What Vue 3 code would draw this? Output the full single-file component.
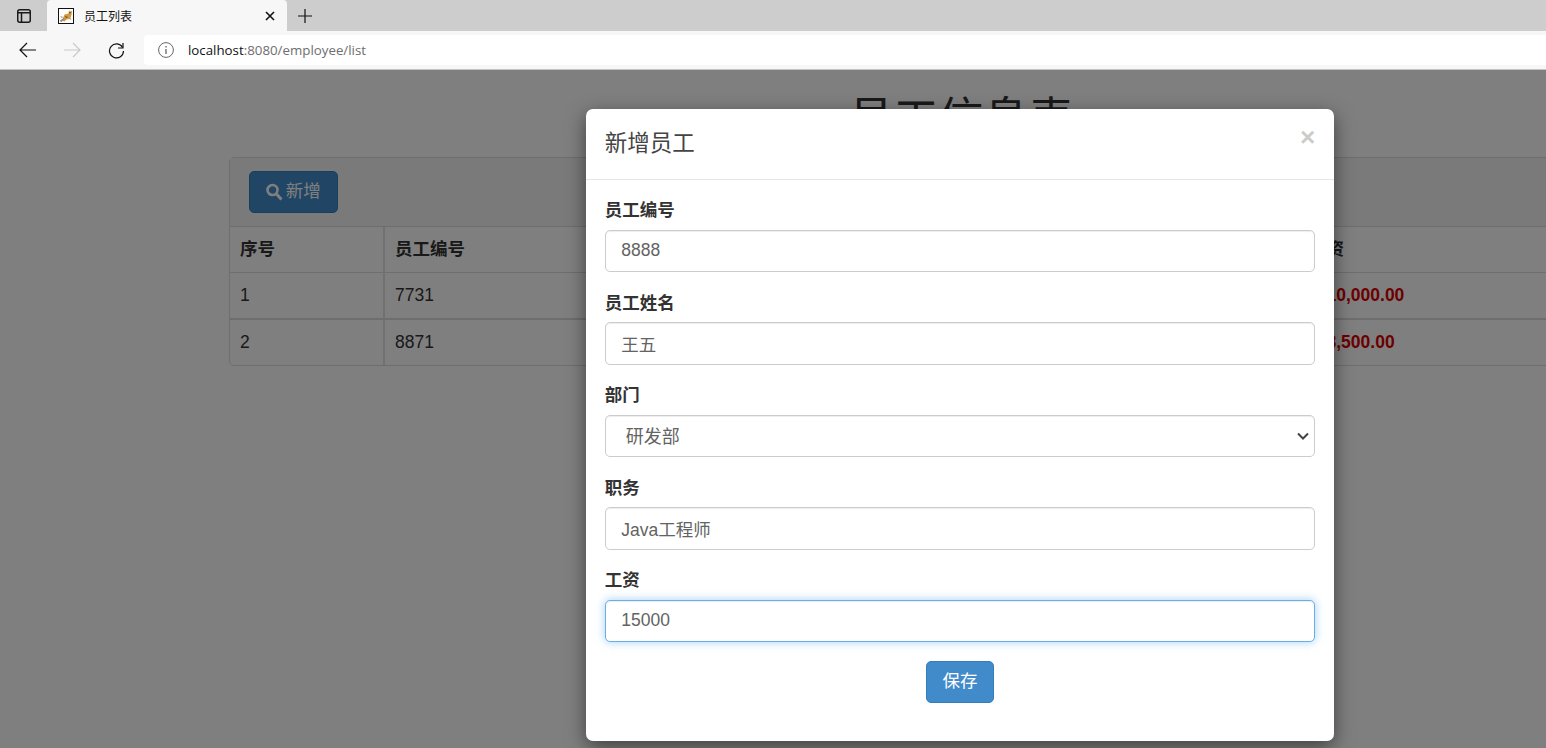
<script setup>
const fields = [
  { label: '员工编号', value: '8888' },
  { label: '员工姓名', value: '王五' },
  { label: '部门', options: ['研发部'] },
  { label: '职务', value: 'Java工程师' },
  { label: '工资', value: '15000', focus: true }
]
const heads = ['序号', '员工编号', '员工姓名', '部门', '职务', '工资']
const rows = [
  ['1', '7731', '￥10,000.00'],
  ['2', '8871', '￥8,500.00']
]
</script>

<template>
  <div class="root">
    <header class="chrome">
      <div class="strip">
        <div class="strip-btn">
          <svg width="16" height="16" viewBox="0 0 16 16" fill="none" stroke="#1a1a1a" stroke-width="1.5">
            <rect x="1.75" y="1.75" width="12.5" height="12.5" rx="2" />
            <path d="M1.75 4.75h12.5M5.5 4.75v9.5" />
          </svg>
        </div>
        <div class="tab">
          <svg class="favicon" width="16" height="16" viewBox="0 0 16 16">
            <rect x="0.5" y="0.5" width="15" height="15" fill="#fff" stroke="#111" />
            <path d="M5 10l1.500-3.500 4-1 .5-3 1.500 1 1.500-1-.5 4.500-1 2.500 1 2.500-2-1-3 .5-2 2-1.500-.5z" fill="#d09a45" />
            <path d="M1.500 13l4-3 1 1-3 3zM2 8l3 1-1 1z" fill="#8a8a7a" />
            <path d="M11 4l2 0-1 2zM7 8l3 1-2 1z" fill="#6b4a1c" />
          </svg>
          <span class="tab-title">员工列表</span>
          <svg class="tab-close" width="10" height="10" viewBox="0 0 10 10" stroke="#111" stroke-width="1.6">
            <path d="M1 1l8 8M9 1l-8 8" />
          </svg>
        </div>
        <div class="strip-plus">
          <svg width="14" height="14" viewBox="0 0 14 14" stroke="#111" stroke-width="1.2">
            <path d="M7 0v14M0 7h14" />
          </svg>
        </div>
      </div>
      <div class="toolbar">
        <div class="nav-btn">
          <svg width="18" height="16" viewBox="0 0 18 16" fill="none" stroke="#111" stroke-width="1.2">
            <path d="M17 8H1M8 1L1 8l7 7" />
          </svg>
        </div>
        <div class="nav-btn">
          <svg width="18" height="16" viewBox="0 0 18 16" fill="none" stroke="#c9c9c9" stroke-width="1.2">
            <path d="M1 8h16M10 1l7 7-7 7" />
          </svg>
        </div>
        <div class="nav-btn">
          <svg width="17" height="17" viewBox="0 0 17 17" fill="none" stroke="#111" stroke-width="1.2">
            <path d="M14.600 5.500A7 7 0 1 0 15.500 9" />
            <path d="M15 1v5h-5" />
          </svg>
        </div>
        <div class="address">
          <svg width="16" height="16" viewBox="0 0 16 16" fill="none" stroke="#666" stroke-width="1">
            <circle cx="8" cy="8" r="7.400" />
            <path d="M8 7v5M8 4v1.600" stroke-width="1.300" />
          </svg>
          <span class="url"><span class="host">localhost</span>:8080/employee/list</span>
        </div>
      </div>
    </header>

    <main class="page">
      <h1 class="title">员工信息表</h1>
      <section class="panel">
        <div class="panel-heading">
          <button class="btn add-btn" type="button">
            <svg class="search" width="18" height="18" viewBox="0 0 18 18" fill="none" stroke="#fff">
              <circle cx="7.500" cy="7" r="5" stroke-width="2.600" />
              <path d="M11.500 11l5 5.500" stroke-width="3" />
            </svg>
            新增
          </button>
        </div>
        <table class="table">
          <colgroup>
            <col class="c1" /><col class="c2" /><col class="c3" /><col class="c4" /><col class="c5" /><col />
          </colgroup>
          <thead>
            <tr><th v-for="h in heads" :key="h">{{ h }}</th></tr>
          </thead>
          <tbody>
            <tr v-for="r in rows" :key="r[0]">
              <td>{{ r[0] }}</td>
              <td>{{ r[1] }}</td>
              <td></td>
              <td></td>
              <td></td>
              <td class="money">{{ r[2] }}</td>
            </tr>
          </tbody>
        </table>
      </section>

      <div class="backdrop"></div>

      <div class="modal">
        <div class="modal-header">
          <h4 class="modal-title">新增员工</h4>
          <span class="close">×</span>
        </div>
        <form class="modal-body">
          <div v-for="f in fields" :key="f.label" class="form-group">
            <label class="label">{{ f.label }}</label>
            <div v-if="f.options" class="select-wrap">
              <select class="control select">
                <option v-for="o in f.options" :key="o">{{ o }}</option>
              </select>
              <svg class="chevron" width="12" height="8" viewBox="0 0 12 8" fill="none" stroke="#444" stroke-width="2">
                <path d="M1 1.500l5 5 5-5" />
              </svg>
            </div>
            <input v-else class="control" :class="{ focus: f.focus }" type="text" :value="f.value" />
          </div>
          <div class="actions">
            <button class="btn save-btn" type="button">保存</button>
          </div>
        </form>
      </div>
    </main>
  </div>
</template>

<style scoped>
.root {
  width: 1546px;
  height: 748px;
  overflow: hidden;
  display: flex;
  flex-direction: column;
  background: #fff;
  font-family: "Liberation Sans", "Noto Sans CJK SC", sans-serif;
  font-size: 17.5px;
  line-height: 25px;
  color: #333;
}
.chrome {
  flex: none;
  height: 70px;
  display: flex;
  flex-direction: column;
  font-family: "Open Sans", "Noto Sans CJK SC", sans-serif;
}
.strip {
  height: 31px;
  flex: none;
  display: flex;
  background: #cdcdcd;
}
.strip-btn {
  width: 47px;
  display: flex;
  align-items: center;
  justify-content: center;
}
.tab {
  width: 240px;
  display: flex;
  align-items: center;
  background: #f7f7f7;
  border-radius: 4px 4px 0 0;
  padding-left: 11px;
  box-sizing: border-box;
}
.tab-title {
  margin-left: 10px;
  font-size: 12px;
  line-height: 16px;
  color: #111;
  font-family: "Noto Sans CJK SC", sans-serif;
}
.tab-close {
  margin-left: auto;
  margin-right: 12px;
}
.strip-plus {
  width: 36px;
  display: flex;
  align-items: center;
  justify-content: center;
}
.toolbar {
  flex: 1;
  display: flex;
  align-items: center;
  padding-left: 6px;
  background: #f7f7f7;
  border-bottom: 1px solid #c4c4c4;
}
.nav-btn {
  width: 44px;
  height: 30px;
  display: flex;
  align-items: center;
  justify-content: center;
}
.address {
  margin-left: 6px;
  flex: 1;
  height: 30px;
  display: flex;
  align-items: center;
  gap: 14px;
  padding-left: 14px;
  background: #fff;
  border-radius: 4px 0 0 4px;
}
.url {
  font-size: 13.300px;
  line-height: 18px;
  color: #6e6e6e;
  white-space: nowrap;
}
.host {
  color: #111;
}
.page {
  position: relative;
  flex: 1;
  padding-left: 229px;
  overflow: hidden;
}
.title {
  width: 1464px;
  margin: 25px 0 12.500px;
  font-size: 45px;
  line-height: 49.500px;
  font-weight: 400;
  text-align: center;
  color: #333;
}
.panel {
  width: 1464px;
  box-sizing: border-box;
  border: 1px solid #ddd;
  border-radius: 5px;
  background: #fff;
}
.panel-heading {
  padding: 12.500px 18.750px;
  height: 69px;
  box-sizing: border-box;
  background: #f5f5f5;
  border-bottom: 1px solid #ddd;
}
.btn {
  height: 42px;
  box-sizing: border-box;
  padding: 0 15.500px;
  font: inherit;
  border: 1px solid #357ebd;
  border-radius: 5px;
  background: #428bca;
  color: #fff;
  display: inline-flex;
  align-items: center;
}
.add-btn {
  padding: 0 16px 0 15px;
}
.search {
  margin-right: 3px;
}
.table {
  width: 100%;
  table-layout: fixed;
  border-collapse: collapse;
}
.c1 { width: 154px; }
.c2 { width: 228px; }
.c3 { width: 300px; }
.c4 { width: 200px; }
.c5 { width: 186px; }
th, td {
  padding: 10px;
  height: 45px;
  box-sizing: border-box;
  text-align: left;
  border-left: 2px solid #e3e3e3;
  border-bottom: 1px solid #ddd;
  white-space: nowrap;
}
th:first-child, td:first-child {
  border-left: 0;
}
thead th {
  font-weight: 700;
}
tbody tr:first-child td {
  border-bottom: 2px solid #ddd;
  height: 46px;
}
tbody tr:last-child td {
  border-bottom: 0;
  height: 45px;
}
.money {
  color: #d80000;
  font-weight: 700;
}
.backdrop {
  position: absolute;
  inset: 0;
  background: rgba(0, 0, 0, 0.5);
}
.modal {
  position: absolute;
  left: 586px;
  top: 39px;
  width: 748px;
  box-sizing: border-box;
  background: #fff;
  border-radius: 7px;
  box-shadow: 0 6px 19px rgba(0, 0, 0, 0.5);
}
.modal-header {
  display: flex;
  justify-content: space-between;
  align-items: flex-start;
  padding: 18.750px 18.750px 18.250px;
  border-bottom: 1px solid #e5e5e5;
}
.modal-title {
  margin: 0;
  font-size: 22.500px;
  line-height: 32.500px;
  font-weight: 400;
  color: #444;
}
.close {
  font-size: 26.250px;
  line-height: 26px;
  font-weight: 700;
  color: #000;
  opacity: 0.2;
  margin-top: -4px;
}
.modal-body {
  padding: 18.650px 18.750px 19.600px;
}
.form-group {
  margin-bottom: 18.250px;
}
.label {
  display: block;
  margin-bottom: 6.750px;
  font-weight: 700;
}
.control {
  display: block;
  width: 100%;
  height: 42.500px;
  box-sizing: border-box;
  padding: 7.500px 15.500px 8.500px;
  font: inherit;
  color: #636363;
  background: #fff;
  border: 1px solid #ccc;
  border-radius: 5px;
  outline: 0;
  box-shadow: inset 0 1px 1px rgba(0, 0, 0, 0.075);
}
.control.focus {
  border-color: #66afe9;
  box-shadow: inset 0 1px 1px rgba(0, 0, 0, 0.075), 0 0 10px rgba(102, 175, 233, 0.6);
}
.select-wrap {
  position: relative;
}
.select {
  appearance: none;
  padding: 8.500px 15.500px 6.500px 20px;
  font-size: 18px;
}
.chevron {
  position: absolute;
  right: 6px;
  top: 17px;
  pointer-events: none;
}
.actions {
  display: flex;
  justify-content: center;
  padding-bottom: 18.750px;
}
</style>

<style>
html, body {
  margin: 0;
  overflow: hidden;
}
</style>
